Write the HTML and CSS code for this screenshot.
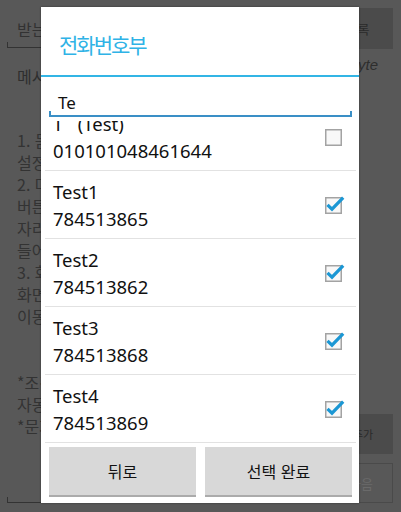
FILE: index.html
```html
<!DOCTYPE html>
<html lang="ko">
<head>
<meta charset="utf-8">
<title>전화번호부</title>
<link rel="stylesheet" href="styles.css">
</head>
<body>
<div class="app">
  <div class="top-row">
    <div class="to-field">받는 사람</div>
    <div class="dark-btn top-btn">주소록</div>
  </div>
  <div class="msg-head">
    <span class="msg-label">메시지 내용</span>
    <span class="byte">0/80 byte</span>
  </div>
  <div class="main">
    <div class="msg-field">
      <p class="hint-lines">1. 돋보기 버튼을 눌러 번호를<br>설정하세요.<br>2. 마침 버튼을 누르면<br>버튼 옆의 빈<br>자리에 번호가<br>들어갑니다.<br>3. 화면 아래의<br>화면으로<br>이동합니다.<br><br><br>*조건에 맞으면<br>자동으로 전송됩니다.<br>*문자 요금이 부과됩니다.</p>
    </div>
    <div class="side">
      <div class="dark-btn add-btn">번호추가</div>
      <div class="outline-btn">다음</div>
    </div>
  </div>
</div>

<div class="dialog">
  <div class="dlg-title">전화번호부</div>
  <div class="search">
    <div class="search-input">Te</div>
  </div>
  <ul class="contacts">
    <li class="contact first">
      <div class="c-text"><span>T&nbsp;&nbsp;&nbsp;(Test)</span><span>010101048461644</span></div>
      <svg class="cb" viewBox="0 0 20 20"><rect x="0.75" y="2.75" width="15.5" height="15.5" fill="#f8f8f8" stroke="#a3a3a3" stroke-width="1.5"/></svg>
    </li>
    <li class="contact">
      <div class="c-text"><span>Test1</span><span>784513865</span></div>
      <svg class="cb" viewBox="0 0 20 20"><rect x="0.75" y="2.75" width="15.5" height="15.5" fill="#f8f8f8" stroke="#a3a3a3" stroke-width="1.5"/><path d="M2.5 9.8 L7 14.2 L18.2 2.6" fill="none" stroke="#1b97d4" stroke-width="3.2"/></svg>
    </li>
    <li class="contact">
      <div class="c-text"><span>Test2</span><span>784513862</span></div>
      <svg class="cb" viewBox="0 0 20 20"><rect x="0.75" y="2.75" width="15.5" height="15.5" fill="#f8f8f8" stroke="#a3a3a3" stroke-width="1.5"/><path d="M2.5 9.8 L7 14.2 L18.2 2.6" fill="none" stroke="#1b97d4" stroke-width="3.2"/></svg>
    </li>
    <li class="contact">
      <div class="c-text"><span>Test3</span><span>784513868</span></div>
      <svg class="cb" viewBox="0 0 20 20"><rect x="0.75" y="2.75" width="15.5" height="15.5" fill="#f8f8f8" stroke="#a3a3a3" stroke-width="1.5"/><path d="M2.5 9.8 L7 14.2 L18.2 2.6" fill="none" stroke="#1b97d4" stroke-width="3.2"/></svg>
    </li>
    <li class="contact">
      <div class="c-text"><span>Test4</span><span>784513869</span></div>
      <svg class="cb" viewBox="0 0 20 20"><rect x="0.75" y="2.75" width="15.5" height="15.5" fill="#f8f8f8" stroke="#a3a3a3" stroke-width="1.5"/><path d="M2.5 9.8 L7 14.2 L18.2 2.6" fill="none" stroke="#1b97d4" stroke-width="3.2"/></svg>
    </li>
  </ul>
  <div class="actions">
    <div class="btn">뒤로</div>
    <div class="btn">선택 완료</div>
  </div>
</div>
</body>
</html>
```
FILE: styles.css
```css
body {
  margin: 0;
  width: 401px;
  height: 512px;
  overflow: hidden;
  background: #585858;
  font-family: "Noto Sans CJK KR", "Noto Sans", sans-serif;
  position: relative;
}

.app {
  box-sizing: border-box;
  height: 512px;
  padding: 8px 8px 0 7px;
  color: #303030;
}

.top-row {
  display: flex;
  height: 41px;
}

.to-field {
  flex: 1;
  height: 40px;
  box-sizing: border-box;
  border-bottom: 1px solid #333;
  position: relative;
  display: flex;
  align-items: center;
  padding: 2px 0 0 10px;
  font-size: 16px;
  color: #323232;
}

.to-field::before,
.msg-field::before {
  content: "";
  position: absolute;
  left: 0;
  bottom: 0;
  width: 1px;
  height: 5px;
  background: #333;
}

.dark-btn {
  background: #4b4b4b;
  display: flex;
  align-items: center;
  justify-content: center;
  color: #2a2a2a;
}

.top-btn {
  width: 83px;
  font-size: 13px;
}

.msg-head {
  display: flex;
  justify-content: space-between;
  height: 40px;
  padding: 0 15px 0 10px;
}

.msg-label {
  font-size: 16px;
  line-height: 20px;
  margin-top: 17px;
  color: #2e2e2e;
}

.byte {
  font-family: "Liberation Sans", sans-serif;
  font-style: italic;
  font-size: 15px;
  line-height: 18px;
  margin-top: 7px;
  color: #2e2e2e;
}

.main {
  display: flex;
  height: 414px;
}

.msg-field {
  flex: 1;
  box-sizing: border-box;
  border-bottom: 1px solid #333;
  position: relative;
  padding: 40px 0 0 10px;
  overflow: hidden;
}

.hint-lines {
  margin: 0;
  font-size: 16px;
  line-height: 22px;
  white-space: nowrap;
  color: #333;
}

.side {
  width: 80px;
  display: flex;
  flex-direction: column;
  justify-content: flex-end;
  gap: 9px;
  margin-left: 6px;
}

.add-btn {
  height: 40px;
  font-size: 11px;
}

.outline-btn {
  height: 40px;
  box-sizing: border-box;
  border: 1px solid #4a4a4a;
  font-size: 13px;
  color: #6a6a6a;
  display: flex;
  align-items: center;
  justify-content: center;
  padding-left: 16px;
}

/* dialog */
.dialog {
  position: absolute;
  left: 41px;
  top: 7px;
  width: 318px;
  height: 496px;
  background: #fff;
  box-shadow: 0 0 2px rgba(0, 0, 0, 0.4);
  font-family: "Noto Sans", "Noto Sans CJK KR", sans-serif;
  display: flex;
  flex-direction: column;
}

.dlg-title {
  height: 70px;
  box-sizing: border-box;
  padding: 5px 0 0 18px;
  display: flex;
  align-items: center;
  font-family: "Noto Sans CJK KR", sans-serif;
  font-size: 21px;
  letter-spacing: -2px;
  color: #2fb3e6;
  border-bottom: 2px solid #33b5e5;
}

.search {
  height: 44px;
  box-sizing: border-box;
  padding: 0 7px 4px 8px;
  display: flex;
  align-items: flex-end;
}

.search-input {
  flex: 1;
  height: 30px;
  box-sizing: border-box;
  border-bottom: 2px solid #3a8fc6;
  position: relative;
  padding: 3px 0 0 9px;
  font-size: 17px;
  line-height: 25px;
  color: #111;
}

.search-input::before,
.search-input::after {
  content: "";
  position: absolute;
  bottom: -2px;
  width: 2px;
  height: 6px;
  background: #3a8fc6;
}

.search-input::before { left: 0; }
.search-input::after { right: 0; }

.contacts {
  list-style: none;
  margin: 0 3px 0 4px;
  padding: 0;
  height: 322px;
  overflow: hidden;
}

.contact {
  height: 68px;
  box-sizing: border-box;
  border-bottom: 1px solid #e2e2e2;
  display: flex;
  align-items: center;
  justify-content: space-between;
  padding: 0 11px 0 8px;
}

.contact.first {
  margin-top: -18px;
}

.c-text {
  display: flex;
  flex-direction: column;
  font-size: 18.5px;
  line-height: 27px;
  color: #111;
  white-space: nowrap;
}

.cb {
  width: 20px;
  height: 20px;
  overflow: visible;
  flex: none;
}

.actions {
  flex: 1;
  display: flex;
  gap: 9px;
  padding: 4px 7px 6px 8px;
}

.btn {
  flex: 1;
  background: #d8d8d8;
  border-bottom: 2px solid #ababab;
  box-sizing: border-box;
  display: flex;
  align-items: center;
  justify-content: center;
  font-family: "Noto Sans CJK KR", sans-serif;
  font-size: 16px;
  color: #111;
}
```
